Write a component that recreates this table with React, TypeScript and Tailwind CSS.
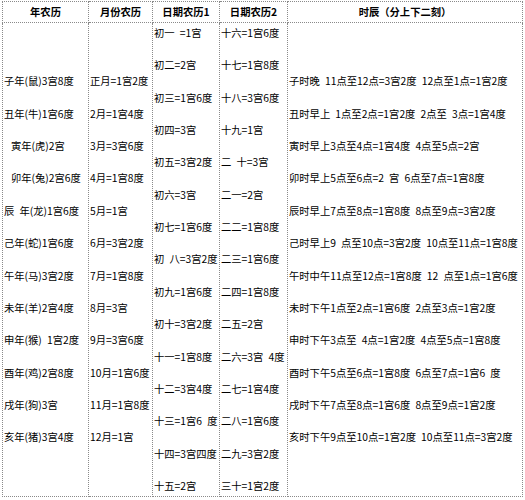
import React from 'react';

const years = [
    '子年(鼠)3宫8度',
    '丑年(牛)1宫6度',
    '  寅年(虎)2宫',
    '  卯年(兔)2宫6度',
    '辰 年(龙)1宫6度',
    '己年(蛇)1宫6度',
    '午年(马)3宫2度',
    '未年(羊)2宫4度',
    '申年(猴) 1宫2度',
    '酉年(鸡)2宫8度',
    '戌年(狗)3宫',
    '亥年(猪)3宫4度',
];

const months = [
    '正月=1宫2度', '2月=1宫4度', '3月=3宫6度', '4月=1宫8度', '5月=1宫', '6月=3宫2度',
    '7月=1宫8度', '8月=3宫', '9月=3宫6度', '10月=1宫6度', '11月=1宫8度', '12月=1宫',
];

const days1 = [
    '初一 =1宫', '初二=2宫', '初三=1宫6度', '初四=3宫', '初五=3宫2度', '初六=3宫',
    '初七=1宫6度', '初 八=3宫2度', '初九=1宫6度', '初十=3宫2度', '十一=1宫8度',
    '十二=3宫4度', '十三=1宫6 度', '十四=3宫四度', '十五=2宫',
];

const days2 = [
    '十六=1宫6度', '十七=1宫8度', '十八=3宫6度', '十九=1宫', '二 十=3宫', '二一=2宫',
    '二二=1宫8度', '二三=1宫6度', '二四=1宫8度', '二五=2宫', '二六=3宫 4度',
    '二七=1宫4度', '二八=1宫6度', '二九=3宫2度', '三十=1宫2度',
];

const hours = [
    '子时晚 11点至12点=3宫2度 12点至1点=1宫2度',
    '丑时早上 1点至2点=1宫2度 2点至 3点=1宫4度',
    '寅时早上3点至4点=1宫4度 4点至5点=2宫',
    '卯时早上5点至6点=2 宫 6点至7点=1宫8度',
    '辰时早上7点至8点=1宫8度 8点至9点=3宫2度',
    '己时早上9 点至10点=3宫2度 10点至11点=1宫8度',
    '午时中午11点至12点=1宫8度 12 点至1点=1宫6度',
    '未时下午1点至2点=1宫6度 2点至3点=1宫2度',
    '申时下午3点至 4点=1宫2度 4点至5点=1宫8度',
    '酉时下午5点至6点=1宫8度 6点至7点=1宫6 度',
    '戌时下午7点至8点=1宫6度 8点至9点=1宫2度',
    '亥时下午9点至10点=1宫2度 10点至11点=3宫2度',
];

const Lines: React.FC<{ items: string[] }> = ({ items }) => (
    <div className="flex flex-col gap-[16.2px]">
        {items.map((t, i) => {
            const indent = t.startsWith(' ');
            return (
                <div key={i} className={`h-[16.2px] whitespace-nowrap ${indent ? 'pl-[7px]' : ''}`}>
                    {t.trim().replace(/ /g, '\u2002')}
                </div>
            );
        })}
    </div>
);

const th = 'border border-dotted border-[#8a8a8a] font-bold text-center h-[21px] p-0';
const td = 'border border-dotted border-[#8a8a8a] align-middle px-[1px] py-0';

export default function App() {
    return (
        <div
            className="bg-white w-[525px] h-[500px] pl-[2px] pt-[1px] text-black text-[10.3px] leading-[16.2px]"
            style={{ fontFamily: '"Noto Sans CJK SC", "Liberation Sans", sans-serif' }}
        >
            <table className="border-collapse table-fixed w-[520px]">
                <colgroup>
                    <col className="w-[86px]" />
                    <col className="w-[64px]" />
                    <col className="w-[67px]" />
                    <col className="w-[68px]" />
                    <col className="w-[235px]" />
                </colgroup>
                <thead>
                    <tr>
                        <th className={th}>年农历</th>
                        <th className={th}>月份农历</th>
                        <th className={th}>日期农历1</th>
                        <th className={th}>日期农历2</th>
                        <th className={th}>时辰（分上下二刻）</th>
                    </tr>
                </thead>
                <tbody>
                    <tr className="h-[474px]">
                        <td className={td}><Lines items={years} /></td>
                        <td className={td}><Lines items={months} /></td>
                        <td className={td}><Lines items={days1} /></td>
                        <td className={td}><Lines items={days2} /></td>
                        <td className={td}><Lines items={hours} /></td>
                    </tr>
                </tbody>
            </table>
        </div>
    );
}
